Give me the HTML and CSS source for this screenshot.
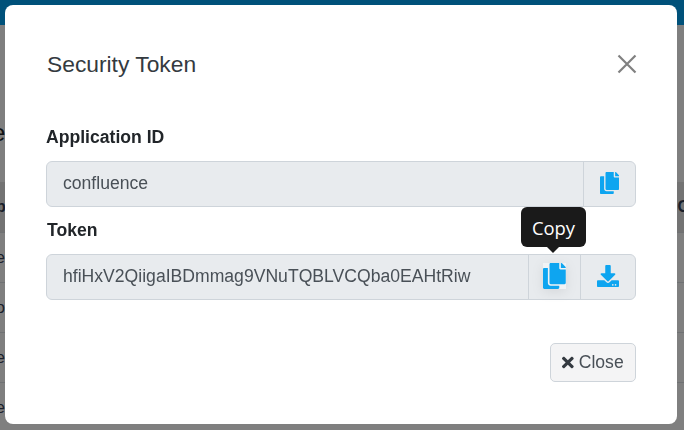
FILE: index.html
```html
<!DOCTYPE html>
<html lang="en">
<head>
    <meta charset="UTF-8">
    <meta name="viewport" content="width=device-width, initial-scale=1.0">
    <title>Security Token</title>
    <link rel="stylesheet" href="styles.css">
</head>
<body>
    <!-- Page behind the modal -->
    <div class="topbar"></div>
    <div class="page">
        <div class="page-heading">e</div>
        <div class="table-row table-head"><span>p</span><span>C</span></div>
        <div class="table-row"><span>e</span></div>
        <div class="table-row"><span>o</span></div>
        <div class="table-row"><span>e</span></div>
        <div class="table-row"><span>e</span></div>
    </div>

    <div class="backdrop"></div>

    <div class="modal">
        <div class="modal-header">
            <h2>Security Token</h2>
            <svg class="close-x" viewBox="0 0 20 20" aria-label="Close">
                <path d="M1.500 1.500L18.500 18.500M18.500 1.500L1.500 18.500"></path>
            </svg>
        </div>
        <div class="modal-body">
            <label class="field-label">Application ID</label>
            <div class="input-group">
                <div class="input-value">confluence</div>
                <button type="button" class="addon">
                    <svg class="icon" viewBox="0 0 448 512"><path d="M320 448v40c0 13.300-10.700 24-24 24H24c-13.300 0-24-10.700-24-24V120c0-13.300 10.700-24 24-24h72v296c0 30.900 25.100 56 56 56h168zm0-344V0H152c-13.300 0-24 10.700-24 24v368c0 13.300 10.700 24 24 24h272c13.300 0 24-10.700 24-24V128H344c-13.200 0-24-10.800-24-24zm120.970-31.030L375.030 7.030A24 24 0 0 0 358.060 0H352v96h96v-6.060a24 24 0 0 0-7.030-16.970z"></path></svg>
                </button>
            </div>
            <label class="field-label token-label">Token</label>
            <div class="input-group">
                <div class="input-value">hfiHxV2QiigaIBDmmag9VNuTQBLVCQba0EAHtRiw</div>
                <button type="button" class="addon">
                    <svg class="icon icon-hover" viewBox="0 0 448 512"><path d="M320 448v40c0 13.300-10.700 24-24 24H24c-13.300 0-24-10.700-24-24V120c0-13.300 10.700-24 24-24h72v296c0 30.900 25.100 56 56 56h168zm0-344V0H152c-13.300 0-24 10.700-24 24v368c0 13.300 10.700 24 24 24h272c13.300 0 24-10.700 24-24V128H344c-13.200 0-24-10.800-24-24zm120.970-31.030L375.030 7.030A24 24 0 0 0 358.060 0H352v96h96v-6.060a24 24 0 0 0-7.030-16.970z"></path></svg>
                    <span class="tooltip">Copy</span>
                </button>
                <button type="button" class="addon addon-wide">
                    <svg class="icon" viewBox="0 0 512 512"><path d="M216 0h80c13.300 0 24 10.700 24 24v168h87.700c17.800 0 26.700 21.500 14.100 34.100L269.700 378.300c-7.500 7.500-19.800 7.500-27.300 0L90.100 226.100c-12.600-12.600-3.700-34.100 14.100-34.100H192V24c0-13.300 10.700-24 24-24zm296 376v112c0 13.300-10.700 24-24 24H24c-13.300 0-24-10.700-24-24V376c0-13.300 10.700-24 24-24h146.700l49 49c20.100 20.100 52.500 20.100 72.600 0l49-49H488c13.300 0 24 10.700 24 24zm-124 88c0-11-9-20-20-20s-20 9-20 20 9 20 20 20 20-9 20-20zm64 0c0-11-9-20-20-20s-20 9-20 20 9 20 20 20 20-9 20-20z"></path></svg>
                </button>
            </div>
        </div>
        <div class="modal-footer">
            <button type="button" class="close-button">
                <svg class="close-icon" viewBox="0 0 352 512"><path d="M242.720 256l100.070-100.070c12.280-12.280 12.280-32.190 0-44.480l-22.240-22.240c-12.280-12.280-32.190-12.280-44.480 0L176 189.280 75.930 89.210c-12.280-12.280-32.190-12.280-44.480 0L9.210 111.450c-12.280 12.280-12.280 32.190 0 44.480L109.280 256 9.210 356.070c-12.280 12.280-12.280 32.190 0 44.480l22.240 22.240c12.280 12.280 32.200 12.280 44.480 0L176 322.720l100.070 100.070c12.280 12.280 32.200 12.280 44.480 0l22.240-22.240c12.280-12.280 12.280-32.190 0-44.480L242.720 256z"></path></svg>
                Close
            </button>
        </div>
    </div>
</body>
</html>
```

FILE: styles.css
```css
html, body {
    height: 100%;
}
body {
    margin: 0;
    overflow: hidden;
    font-family: "Liberation Sans", Arial, sans-serif;
    font-size: 17.6px;
    color: #212529;
    background-color: #fff;
}
.topbar {
    height: 25px;
    background-color: #00a2f4;
}
.page-heading {
    height: 157px;
    padding-top: 94px;
    box-sizing: border-box;
    font-size: 24px;
    margin-left: -8px;
}
.table-row {
    display: flex;
    justify-content: space-between;
    align-items: center;
    height: 50px;
    border-top: 1px solid #dee2e6;
    box-sizing: border-box;
    font-size: 16px;
    color: #343f55;
}
.table-head {
    font-weight: bold;
    background-color: #e6e6e6;
    border-top: none;
}
.table-row span:first-child {
    margin-left: -4px;
}
.table-row span:last-child:not(:first-child) {
    margin-right: -5px;
}
.backdrop {
    position: fixed;
    top: 0;
    left: 0;
    width: 100%;
    height: 100%;
    background-color: rgba(0, 0, 0, 0.5);
}
.modal {
    position: fixed;
    top: 5px;
    left: 5px;
    width: 672px;
    height: 419px;
    box-sizing: border-box;
    display: flex;
    flex-direction: column;
    background-color: #fff;
    border-radius: 8px;
}
.modal-header {
    display: flex;
    justify-content: space-between;
    align-items: center;
    padding: 42px 40px 0 42px;
    height: 34px;
}
.modal-header h2 {
    margin: 0;
    font-size: 22.8px;
    font-weight: normal;
    color: #343a40;
}
.close-x {
    width: 20px;
    height: 20px;
    fill: none;
    stroke: #808080;
    stroke-width: 2.2;
}
.modal-body {
    padding: 45px 41px 0 41px;
}
.field-label {
    display: block;
    font-weight: bold;
    line-height: 22px;
    margin-bottom: 13px;
}
.token-label {
    margin-left: 1px;
    margin-top: 12px;
}
.input-group {
    display: flex;
    height: 46px;
    box-sizing: border-box;
    background-color: #e8ebee;
    border: 1px solid #ced4da;
    border-radius: 6px;
}
.input-value {
    flex: 1;
    padding-left: 16px;
    line-height: 43px;
    color: #495057;
}
.addon {
    position: relative;
    width: 52px;
    padding: 0 0 2px;
    display: flex;
    align-items: center;
    justify-content: center;
    background: transparent;
    border: none;
    border-left: 1px solid #ced4da;
}
.addon-wide {
    width: 55px;
}
.icon {
    height: 22px;
    fill: #0ea5f0;
}
.icon-hover {
    height: 26px;
    background-color: #f1f3f5;
    filter: drop-shadow(0 3px 6px rgba(0, 0, 0, 0.08));
}
.tooltip {
    position: absolute;
    top: -48px;
    left: -8px;
    width: 65px;
    height: 40px;
    display: flex;
    align-items: center;
    justify-content: center;
    font-family: "Open Sans", sans-serif;
    font-size: 18.4px;
    color: #fff;
    background-color: #1a1a1a;
    border-radius: 6px;
}
.tooltip::after {
    content: "";
    position: absolute;
    left: 26px;
    bottom: -6px;
    border-left: 6px solid transparent;
    border-right: 6px solid transparent;
    border-top: 6px solid #1a1a1a;
}
.modal-footer {
    display: flex;
    justify-content: flex-end;
    padding: 43px 41px 0 0;
}
.close-button {
    display: flex;
    align-items: center;
    gap: 5px;
    width: 86px;
    height: 39px;
    padding: 0 0 0 11px;
    box-sizing: border-box;
    font-family: "Liberation Sans", Arial, sans-serif;
    font-size: 17.6px;
    color: #495057;
    background-color: #f4f4f5;
    border: 1px solid #ced4da;
    border-radius: 5px;
}
.close-icon {
    height: 17px;
    fill: #343a40;
}
```
